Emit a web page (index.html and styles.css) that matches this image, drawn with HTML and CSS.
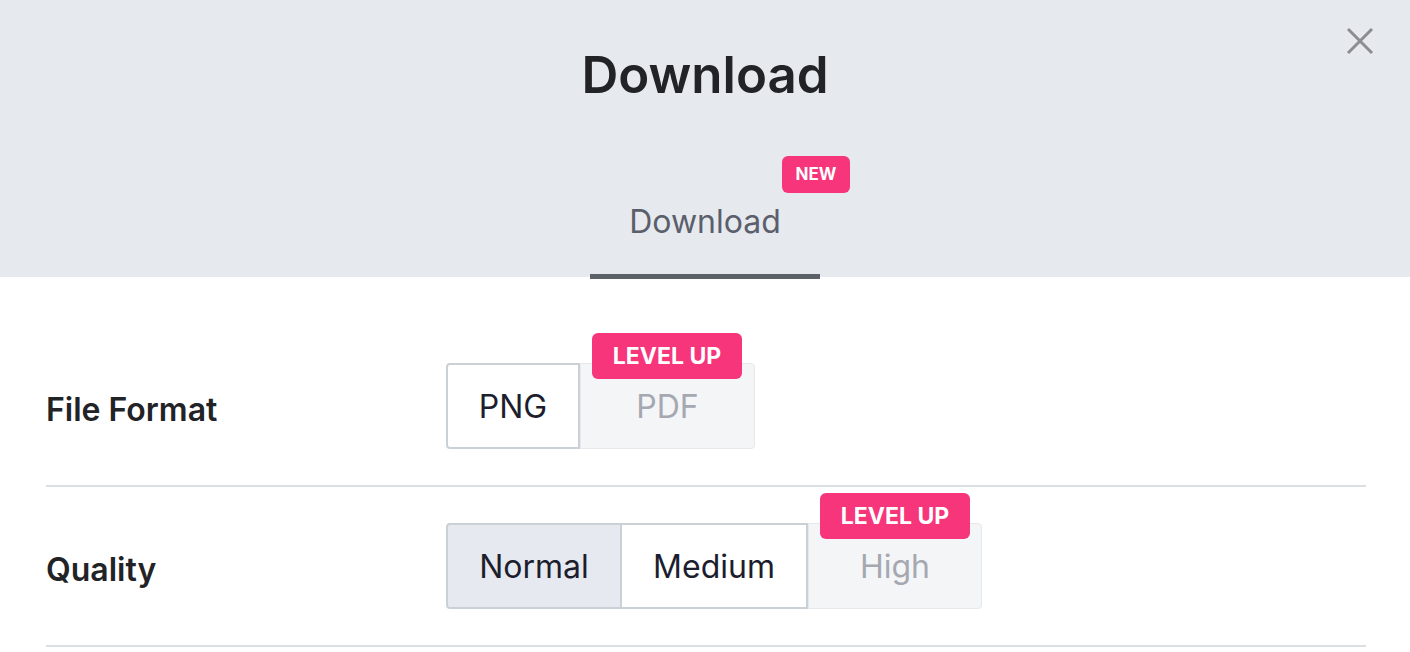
FILE: index.html
```html
<!DOCTYPE html>
<html lang="en">
<head>
<meta charset="UTF-8">
<meta name="viewport" content="width=device-width, initial-scale=1.0">
<title>Download</title>
<link rel="stylesheet" href="styles.css">
</head>
<body>
<div class="modal">
    <!-- Header with title and tabs -->
    <div class="modal-header">
        <h2>Download</h2>
        <span class="close">
            <svg width="28" height="28" viewBox="0 0 28 28"><path d="M2 2 L26 26 M26 2 L2 26" stroke="#8b8d92" stroke-width="3" fill="none"/></svg>
        </span>
        <div class="tabs">
            <div class="tab active">
                Download
                <span class="badge badge-new">NEW</span>
            </div>
        </div>
    </div>

    <!-- Options -->
    <div class="modal-body">
        <div class="row">
            <div class="row-label">File Format</div>
            <div class="segment">
                <button class="opt selected w-png">PNG</button>
                <button class="opt locked w-pdf">PDF<span class="badge badge-level">LEVEL UP</span></button>
            </div>
        </div>
        <div class="row">
            <div class="row-label">Quality</div>
            <div class="segment">
                <button class="opt pressed w-normal">Normal</button>
                <button class="opt selected w-medium">Medium</button>
                <button class="opt locked w-high">High<span class="badge badge-level">LEVEL UP</span></button>
            </div>
        </div>
    </div>
</div>
</body>
</html>
```

FILE: styles.css
```css
body {
    margin: 0;
    font-family: Inter, "Liberation Sans", sans-serif;
    color: #222326;
    background: #fff;
}

.modal-header {
    position: relative;
    background-color: #e6e9ee;
    height: 277px;
    text-align: center;
}

.modal-header h2 {
    margin: 0;
    padding-top: 44px;
    font-size: 51px;
    font-weight: 600;
    line-height: 62px;
}

.close {
    position: absolute;
    top: 27px;
    right: 36px;
    cursor: pointer;
}

.tabs {
    display: flex;
    justify-content: center;
    margin-top: 84px;
}

.tab {
    position: relative;
    width: 230px;
    height: 89px;
    box-sizing: border-box;
    padding-top: 12px;
    font-size: 32px;
    color: #5b5f6c;
    border-bottom: 5px solid #5d6168;
}

.badge {
    position: absolute;
    background-color: #f6357b;
    color: #fff;
    font-weight: 700;
    border-radius: 6px;
    text-align: center;
}

.badge-new {
    top: -34px;
    left: 192px;
    width: 68px;
    height: 37px;
    line-height: 37px;
    font-size: 17px;
}

.modal-body {
    padding: 50px 44px 0 46px;
}

.row {
    display: flex;
    align-items: center;
    padding: 36px 0;
    border-bottom: 2px solid #dcdfe3;
}

.row-label {
    width: 400px;
    padding-top: 6px;
    font-size: 32px;
    font-weight: 600;
}

.segment {
    display: flex;
}

.opt {
    position: relative;
    height: 86px;
    padding: 0;
    font-family: inherit;
    font-size: 32px;
    color: #1c1e2e;
    background: #fff;
    border: 2px solid #c9d0d6;
    cursor: pointer;
}

.opt + .opt {
    margin-left: -2px;
}

.opt:first-child {
    border-radius: 4px 0 0 4px;
}

.opt:last-child {
    border-radius: 0 4px 4px 0;
}

.opt.pressed {
    background-color: #e6e9ef;
}

.opt.selected {
    z-index: 1;
}

.opt.locked {
    color: #a5a8b0;
    background-color: #f4f5f7;
    border: 1px solid #e6e8eb;
    margin-left: 0;
}

.w-png { width: 134px; }
.w-pdf { width: 175px; }
.w-normal { width: 176px; }
.w-medium { width: 188px; }
.w-high { width: 174px; }

.badge-level {
    top: -31px;
    left: 11px;
    width: 150px;
    height: 46px;
    line-height: 46px;
    font-size: 23px;
}
```
